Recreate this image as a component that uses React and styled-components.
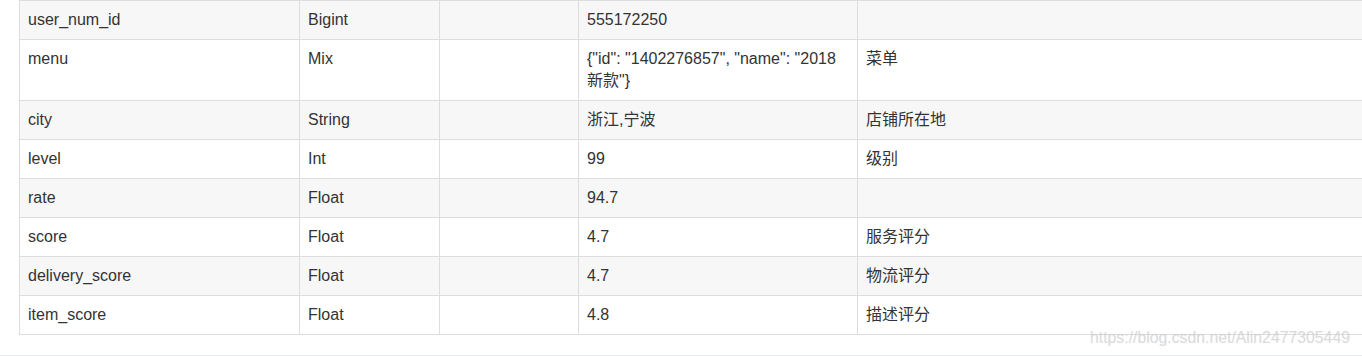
import React from "react";
import styled, { createGlobalStyle } from "styled-components";

const Global = createGlobalStyle`
  html, body { margin: 0; padding: 0; background: #fff; overflow: hidden; }
  body { font-family: "Liberation Sans", Arial, "Noto Sans CJK SC", sans-serif; }
`;

const Page = styled.div`
  position: relative;
  width: 1362px;
  height: 356px;
  overflow: hidden;
`;

const Wrap = styled.div`
  padding-left: 19px;
`;

const Table = styled.table`
  border-collapse: collapse;
  table-layout: fixed;
  width: 1500px;
  font-size: 16px;
  line-height: 22px;
  color: #333;
`;

const Row = styled.tr`
  background: ${(p) => (p.$striped ? "#f7f7f7" : "#fff")};
`;

const Cell = styled.td`
  border: 1px solid #ddd;
  padding: 8px;
  vertical-align: top;
  text-align: left;
  word-wrap: break-word;
`;

const Footer = styled.div`
  margin-top: 20px;
  border-top: 1px solid #e4e9f0;
  height: 10px;
`;

const Watermark = styled.div`
  position: absolute;
  left: 1090px;
  top: 328px;
  font-family: "Liberation Sans", Arial, sans-serif;
  font-size: 15.8px;
  line-height: 20px;
  color: rgba(190, 190, 190, 0.4);
  text-shadow: 0 0 1px rgba(220, 220, 220, 0.6);
  white-space: nowrap;
  pointer-events: none;
`;

const rows = [
  ["user_num_id", "Bigint", "", "555172250", ""],
  ["menu", "Mix", "", '{"id": "1402276857", "name": "2018 新款"}', "菜单"],
  ["city", "String", "", "浙江,宁波", "店铺所在地"],
  ["level", "Int", "", "99", "级别"],
  ["rate", "Float", "", "94.7", ""],
  ["score", "Float", "", "4.7", "服务评分"],
  ["delivery_score", "Float", "", "4.7", "物流评分"],
  ["item_score", "Float", "", "4.8", "描述评分"],
];

const widths = [280, 140, 139, 279, 662];

export default function App() {
  return (
    <Page>
      <Global />
      <Wrap>
        <Table>
          <colgroup>
            {widths.map((w, i) => (
              <col key={i} style={{ width: w }} />
            ))}
          </colgroup>
          <tbody>
            {rows.map((r, i) => (
              <Row key={i} $striped={i % 2 === 0}>
                {r.map((c, j) => (
                  <Cell key={j}>{c}</Cell>
                ))}
              </Row>
            ))}
          </tbody>
        </Table>
      </Wrap>
      <Footer />
      <Watermark>https://blog.csdn.net/Alin2477305449</Watermark>
    </Page>
  );
}
